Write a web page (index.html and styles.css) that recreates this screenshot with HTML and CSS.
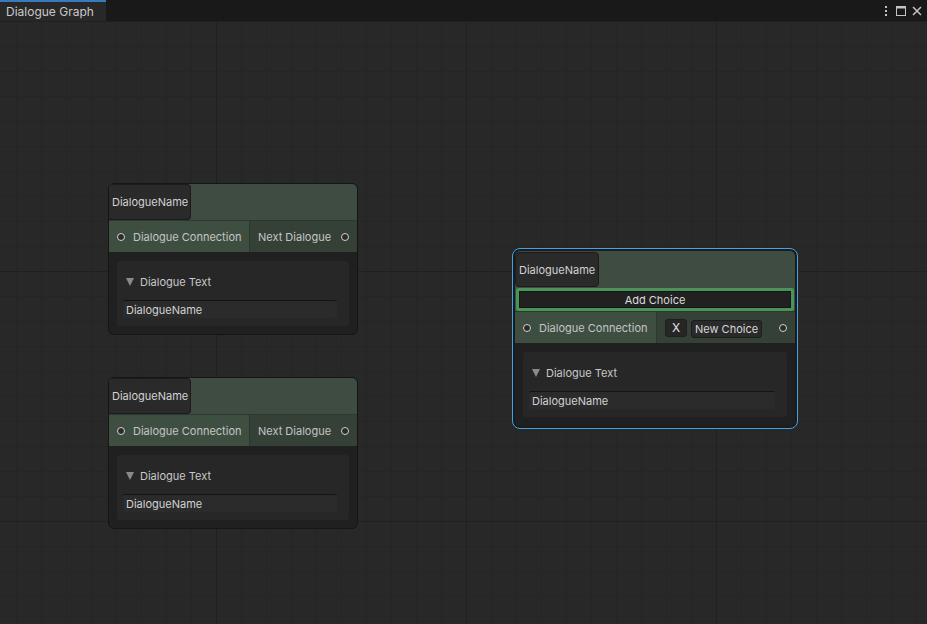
FILE: index.html
```html
<!DOCTYPE html>
<html>
<head>
<meta charset="utf-8">
<link rel="stylesheet" href="styles.css">
</head>
<body>
<div class="window">
  <div class="titlebar">
    <div class="tab">Dialogue Graph</div>
    <div class="spacer"></div>
    <div class="tools">
      <svg class="ico" width="10" height="12" viewBox="0 0 10 12"><rect x="4" y="1" width="2" height="2" fill="#c4c4c4"/><rect x="4" y="5" width="2" height="2" fill="#c4c4c4"/><rect x="4" y="9" width="2" height="2" fill="#c4c4c4"/></svg>
      <svg class="ico" width="12" height="12" viewBox="0 0 12 12"><rect x="1.5" y="1.5" width="9" height="9" fill="none" stroke="#c4c4c4" stroke-width="1"/><rect x="1" y="1" width="10" height="2.5" fill="#c4c4c4"/></svg>
      <svg class="ico" width="12" height="12" viewBox="0 0 12 12"><path d="M2 2 L10 10 M10 2 L2 10" stroke="#c4c4c4" stroke-width="1.5"/></svg>
    </div>
  </div>
  <div class="canvas">
    <div class="node n1">
      <div class="header"><div class="title">DialogueName</div></div>
      <div class="ports">
        <div class="port in"><span class="dot"></span>Dialogue Connection</div>
        <div class="port out">Next Dialogue<span class="dot"></span></div>
      </div>
      <div class="content">
        <div class="fold">
          <div class="fold-label"><span class="tri"></span>Dialogue Text</div>
          <div class="field">DialogueName</div>
        </div>
      </div>
    </div>

    <div class="node n2">
      <div class="header"><div class="title">DialogueName</div></div>
      <div class="ports">
        <div class="port in"><span class="dot"></span>Dialogue Connection</div>
        <div class="port out">Next Dialogue<span class="dot"></span></div>
      </div>
      <div class="content">
        <div class="fold">
          <div class="fold-label"><span class="tri"></span>Dialogue Text</div>
          <div class="field">DialogueName</div>
        </div>
      </div>
    </div>

    <div class="selected n3">
      <div class="node wide">
        <div class="header"><div class="title">DialogueName</div></div>
        <div class="addbar"><div class="addbtn">Add Choice</div></div>
        <div class="ports">
          <div class="port in"><span class="dot"></span>Dialogue Connection</div>
          <div class="port out choice"><span class="xbtn">X</span><span class="choicefield">New Choice</span><span class="grow"></span><span class="dot"></span></div>
        </div>
        <div class="content">
          <div class="fold">
            <div class="fold-label"><span class="tri"></span>Dialogue Text</div>
            <div class="field">DialogueName</div>
          </div>
        </div>
      </div>
    </div>
  </div>
</div>
</body>
</html>
```
FILE: styles.css
```css
* { box-sizing: border-box; }
html, body { margin: 0; padding: 0; }
body {
  width: 927px; height: 624px; overflow: hidden;
  font-family: Inter, "Noto Sans", sans-serif;
  font-size: 11px;
  background: #282828;
  white-space: nowrap;
}
.window { display: flex; flex-direction: column; width: 927px; height: 624px; }
.titlebar {
  height: 21px; display: flex; align-items: stretch;
  background: #191919;
}
.tab {
  width: 106px; background: #282828; color: #c8c8c8;
  border-top: 2px solid #3a79bb;
  padding: 3px 0 0 6px; font-size: 12px; line-height: 14px;
}
.spacer { flex: 1; }
.tools { display: flex; align-items: center; gap: 4px; padding-right: 4px; }
.tools .ico { display: block; }

.canvas {
  flex: 1; position: relative;
  background-color: #282828;
  background-image:
    linear-gradient(to right, #202020 1px, transparent 1px),
    linear-gradient(to bottom, #202020 1px, transparent 1px),
    linear-gradient(to right, #252525 1px, transparent 1px),
    linear-gradient(to bottom, #252525 1px, transparent 1px);
  background-size: 250px 250px, 250px 250px, 25px 25px, 25px 25px;
  background-position: 216px 0, 0 0, 16px 0, 0 0;
}

.node {
  position: absolute; width: 250px;
  background: #202020; border: 1px solid #151515; border-radius: 6px;
  overflow: hidden; display: flex; flex-direction: column;
}
.n1 { left: 108px; top: 162px; }
.n2 { left: 108px; top: 356px; }
.selected {
  position: absolute; left: 512px; top: 227px; width: 286px; height: 181px;
  border: 1px solid #3fa4e6; border-radius: 8px; padding: 1px;
  background: #1b1b1b;
}
.node.wide { position: static; width: 100%; height: 100%; border: 1px solid #1b1b1b; border-radius: 6px; }

.header { height: 36px; background: #3e4c41; display: flex; align-items: stretch; }
.title {
  background: #2a2a2a; color: #d2d2d2; border-radius: 0 4px 4px 0;
  border: 1px solid #1c1c1c; border-left: none;
  padding: 0 3px; display: flex; align-items: center;
  font-size: 11px; width: 82px;
}
.wide .header { height: 37px; padding-top: 1px; padding-bottom: 1px; }
.wide .title { width: 84px; border-radius: 4px; border-left: 1px solid #1c1c1c; }

.addbar { height: 23px; background: #3e4c41; padding: 0 1px; }
.addbtn {
  height: 100%; border: 3px solid #4a945a; background: #212121;
  display: flex; align-items: center; justify-content: center;
  color: #dcdcdc; font-size: 11px; border-radius: 2px;
  box-shadow: inset 0 0 0 1px #161616;
}

.ports { height: 32px; display: flex; border-top: 1px solid #2e3830; }
.port { display: flex; align-items: center; color: #c4c4c4; font-size: 11px; }
.port.in { width: 141px; background: #3e4f41; padding-left: 8px; border-right: 1px solid #2e3830; }
.port.out { flex: 1; background: #354137; padding-left: 8px; padding-right: 8px; }
.dot {
  width: 8px; height: 8px; border-radius: 50%; border: 1.5px solid #d0d0d0;
  background: #2a2a2a; display: inline-block; flex: none;
}
.port.in .dot { margin-right: 8px; }
.port.out .dot { margin-left: auto; }
.wide .port.in { width: 142px; }
.choice { gap: 4px; }
.grow { flex: 1; }
.xbtn {
  width: 22px; height: 18px; background: #262626; border-radius: 3px;
  display: flex; align-items: center; justify-content: center; color: #e0e0e0;
  border: 1px solid #1e1e1e; font-size: 12px;
}
.choicefield {
  height: 18px; background: #2a2a2a; border-radius: 3px; padding: 0 3px;
  display: flex; align-items: center; color: #d6d6d6;
  border: 1px solid #1c1c1c; margin-top: 2px;
}
.choice .dot { margin-left: 0; }

.content { flex: 1; padding: 9px 8px 8px 8px; background: #202020; }
.fold {
  background: #272727; border-radius: 3px; height: 65px;
  padding: 13px 12px 0 6px;
}
.fold-label { display: flex; align-items: center; color: #c8c8c8; height: 16px; font-size: 11px; }
.tri {
  width: 0; height: 0; border-left: 4.5px solid transparent; border-right: 4.5px solid transparent;
  border-top: 8px solid #8a8a8a; margin: 0 6px 0 3px;
}
.field {
  margin-top: 10px; height: 18px; background: #2b2b2b; color: #d2d2d2;
  border-top: 1px solid #141414; border-radius: 2px;
  padding: 0 3px; display: flex; align-items: center;
}
```
